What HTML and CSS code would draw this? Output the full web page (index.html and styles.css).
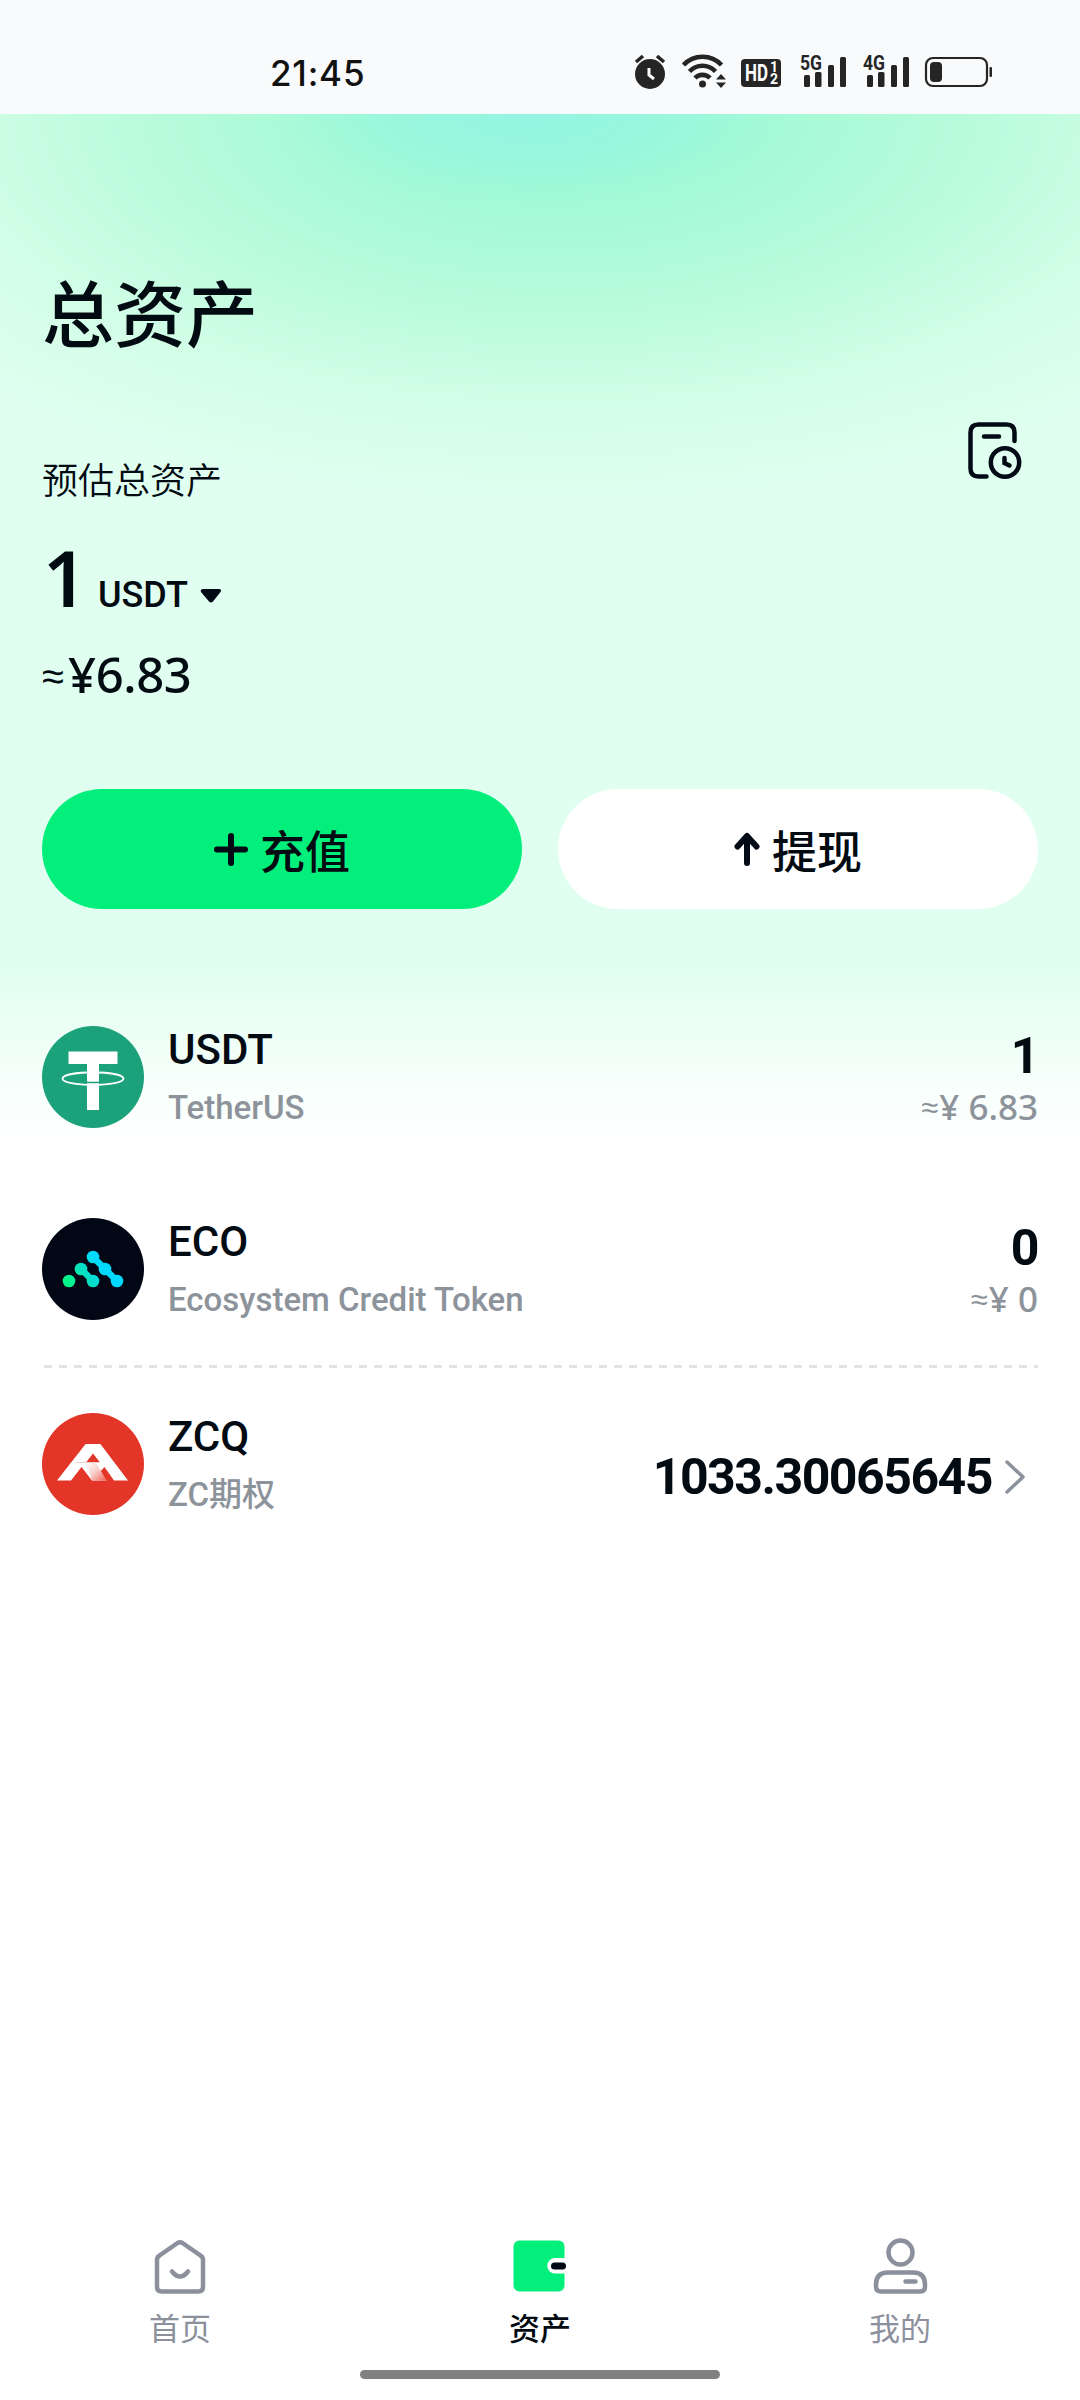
FILE: index.html
```html
<!DOCTYPE html>
<html lang="zh-CN">
<head>
<meta charset="utf-8">
<title>总资产</title>
<link rel="stylesheet" href="styles.css">
</head>
<body>
<div class="screen">
  <header class="status">
    <time class="clock">21:45</time>
    <svg class="status-icons" width="370" height="50" viewBox="630 45 370 50" fill="#252525">
      <circle cx="650" cy="74" r="15"/>
      <path d="M636 62l7-6M664 62l-7-6" stroke="#252525" stroke-width="3.6" fill="none"/>
      <path d="M649 68v7l5 4" stroke="#f9fafc" stroke-width="3" fill="none"/>
      <g fill="none" stroke="#252525" stroke-width="4.6">
        <path d="M683.500 65a26 26 0 0 1 38 0"/>
        <path d="M689.500 71.500a17.500 17.500 0 0 1 26 0"/>
        <path d="M695 78a10.500 10.500 0 0 1 15 0"/>
      </g>
      <circle cx="702.500" cy="84" r="3.500"/>
      <path d="M721 74l5 5.500h-10zM721 88l-5-5.500h10z"/>
      <rect x="741" y="59" width="40" height="28" rx="4"/>
      <text class="hd" x="745" y="81" textLength="23" lengthAdjust="spacingAndGlyphs">HD</text>
      <text class="tiny" x="770" y="72">1</text><text class="tiny" x="770" y="84">2</text>
      <text class="net" x="800" y="70" textLength="22" lengthAdjust="spacingAndGlyphs">5G</text>
      <g><rect x="804" y="75" width="6" height="12" rx="1.500"/><rect x="815" y="72" width="6.500" height="15" rx="1.500"/><rect x="828" y="65" width="6" height="22" rx="1.500"/><rect x="840" y="57" width="6" height="30" rx="1.500"/></g>
      <text class="net" x="863" y="70" textLength="22" lengthAdjust="spacingAndGlyphs">4G</text>
      <g transform="translate(63)"><rect x="804" y="75" width="6" height="12" rx="1.500"/><rect x="815" y="72" width="6.500" height="15" rx="1.500"/><rect x="828" y="65" width="6" height="22" rx="1.500"/><rect x="840" y="57" width="6" height="30" rx="1.500"/></g>
      <rect x="926" y="58" width="61" height="28" rx="7" fill="none" stroke="#252525" stroke-width="2.200"/>
      <rect x="930" y="62" width="12" height="20" rx="4"/>
      <rect x="989.500" y="67" width="2.500" height="10" rx="1"/>
    </svg>
  </header>

  <main class="page">
    <h1 class="title">总资产</h1>
    <section class="summary">
      <div class="label">预估总资产</div>
      <svg class="history" width="56" height="60" viewBox="0 0 56 60" fill="none" stroke="#020b15" stroke-width="4.500" stroke-linecap="round">
        <path d="M19.500 54.500h-8q-8 0-8-8v-36q0-8 8-8h28q8 0 8 8V19M17 14.500h15"/>
        <circle cx="38" cy="40.500" r="14.200"/>
        <path d="M37.500 36v5l5 2.500"/>
      </svg>
    </section>
    <div class="balance"><span class="amount">1</span><span class="unit">USDT</span><svg class="caret" width="22" height="16" viewBox="0 0 22 16" fill="#020b15"><path d="M2.500 1h17q2.500 1 1 3L13 13.500q-2 2-4 0L1 4Q0 2 2.500 1z"/></svg></div>
    <div class="fiat"><span class="approx">≈</span>¥6.83</div>
    <div class="actions">
      <button class="action deposit"><svg width="34" height="34" viewBox="0 0 34 34" stroke="#020b15" stroke-width="6" stroke-linecap="round"><path d="M17 4v27M3 17.500h28"/></svg>充值</button>
      <button class="action withdraw"><svg width="26" height="34" viewBox="0 0 26 34" fill="none" stroke="#020b15" stroke-width="6" stroke-linecap="round" stroke-linejoin="round"><path d="M13 5v26M3.500 14.500L13 4l9.500 10.500"/></svg>提现</button>
    </div>
    <ul class="tokens">
      <li class="token">
        <svg class="logo" viewBox="0 0 102 102"><circle cx="51" cy="51" r="51" fill="#1ba27a"/><path d="M26.500 25.500h49V38H57v46H45V38H26.500z" fill="#fff"/><path d="M45 46.500c-14 .5-24.500 3-24.500 6.300 0 3.500 13.500 6.200 30.500 6.200s30.500-2.700 30.500-6.200c0-3.300-10.500-5.800-24.500-6.300" fill="none" stroke="#fff" stroke-width="1.800"/><path d="M45 56.200q6 .5 12 0" stroke="#1ba27a" stroke-width="1.500" fill="none"/></svg>
        <div class="names"><strong>USDT</strong><span>TetherUS</span></div>
        <div class="values"><b>1</b><span><i>≈</i>¥ 6.83</span></div>
      </li>
      <li class="token">
        <svg class="logo" viewBox="0 0 102 102"><defs><linearGradient id="eco" gradientUnits="userSpaceOnUse" x1="27" y1="63" x2="57" y2="45"><stop offset="0" stop-color="#05f58a"/><stop offset=".5" stop-color="#05dfc4"/><stop offset="1" stop-color="#00d9ff"/></linearGradient></defs><circle cx="51" cy="51" r="51" fill="#020715"/><g fill="url(#eco)"><circle cx="27" cy="63" r="6.300"/><circle cx="39" cy="51" r="6.300"/><circle cx="51" cy="63" r="6.300"/><circle cx="51" cy="39" r="6.300"/><circle cx="63" cy="51" r="6.300"/><circle cx="75" cy="63" r="6.300"/></g><path d="M39 51l12 12M51 39l24 24" stroke="url(#eco)" stroke-width="6.500"/></svg>
        <div class="names"><strong>ECO</strong><span>Ecosystem Credit Token</span></div>
        <div class="values"><b>0</b><span><i>≈</i>¥ 0</span></div>
      </li>
      <li class="token linked">
        <svg class="logo" viewBox="0 0 102 102"><defs><linearGradient id="fold" x1="0" y1="0" x2="1" y2="1"><stop offset="0" stop-color="#fff"/><stop offset=".5" stop-color="#f8ccca"/><stop offset="1" stop-color="#ec6155"/></linearGradient></defs><circle cx="51" cy="51" r="51" fill="#e43529"/><path fill-rule="evenodd" d="M43.600 31H58.400L86 67.500H72L62.500 54 57.500 59.500 64.500 67.500H50L39.500 54 29 67.500H15zM51 40.500L44 49.500H58z" fill="#fff"/><path d="M44 49.500H54L64.500 67.500H50z" fill="url(#fold)"/><path d="M34 49.500H58" stroke="#f5cfcc" stroke-width="1"/></svg>
        <div class="names"><strong>ZCQ</strong><span>ZC期权</span></div>
        <div class="values"><b>1033.30065645</b><svg width="22" height="36" viewBox="0 0 22 36" fill="none" stroke="#8d939d" stroke-width="3.500" stroke-linecap="round" stroke-linejoin="round"><path d="M3 3l16 15L3 33"/></svg></div>
      </li>
    </ul>
  </main>

  <nav class="tabs">
    <a class="tab">
      <svg width="60" height="64" viewBox="0 0 60 64" fill="none" stroke="#8c909d" stroke-width="4.500" stroke-linecap="round" stroke-linejoin="round"><path d="M7 23q0-3 2.500-4.500L27.500 6q2.500-1.500 5 0l18 12.500Q53 20 53 23V50q0 4.500-4.500 4.500h-37Q7 54.500 7 50z"/><path d="M22 34.500q8 10 16 0"/></svg>
      <span>首页</span>
    </a>
    <a class="tab active">
      <svg width="60" height="64" viewBox="0 0 60 64"><rect x="3.500" y="3.500" width="51" height="51" rx="6" fill="#02ef7c"/><path d="M60 21H45a7.500 7.500 0 0 0 0 15.500h15z" fill="#fff"/><rect x="41" y="25.500" width="15" height="7" rx="3.500" fill="#020715"/></svg>
      <span>资产</span>
    </a>
    <a class="tab">
      <svg width="60" height="64" viewBox="0 0 60 64" fill="none" stroke="#8c909d" stroke-width="4.500" stroke-linecap="round"><circle cx="30.500" cy="15.500" r="12"/><path d="M18 35.500h25q12 0 12 12v2q0 5-5 5H11q-5 0-5-5v-2q0-12 12-12zM35.500 44.500h10"/></svg>
      <span>我的</span>
    </a>
  </nav>
  <div class="home-indicator"></div>
</div>
</body>
</html>
```
FILE: styles.css
```css
* { box-sizing: border-box; }
body { margin: 0; }
.screen {
  width: 1080px;
  height: 2400px;
  display: flex;
  flex-direction: column;
  overflow: hidden;
  background: #fff;
  color: #020a12;
  font-family: Roboto, "Noto Sans CJK SC", sans-serif;
}
svg { display: block; flex: none; }
.status {
  height: 114px;
  flex: none;
  display: flex;
  justify-content: space-between;
  align-items: flex-start;
  padding: 45px 80px 0 270px;
  background: #f9fafc;
}
.clock { font: 500 35px/56px Inter, sans-serif; letter-spacing: .8px; color: #111; }
.hd { font: 700 23px Roboto, sans-serif; fill: #fff; }
.tiny { font: 700 14px Roboto, sans-serif; fill: #fff; }
.net { font: 700 20px Roboto, sans-serif; }
.page {
  flex: 1;
  padding: 150px 42px 0;
  background:
    linear-gradient(to bottom, #fff0 850px, #fffc 980px, #fff 1040px),
    radial-gradient(ellipse 260px 95px at 530px 0, #93f5e2 0, #93f5e2aa 40%, #93f5e200 100%),
    radial-gradient(ellipse 820px 390px at 560px 0, #9cf9d4 0, #a5fad6 26%, #b7fbdb 49%, #d1fee6 74%, #e0fff0 100%);
}
.title { margin: 0; font-size: 72px; line-height: 106px; font-weight: 500; }
.summary { display: flex; justify-content: space-between; margin-top: 50px; height: 108px; padding-right: 15px; }
.label { padding-top: 36px; font-size: 36px; line-height: 52px; font-weight: 350; }
.history { margin-top: 2px; }
.balance { display: flex; align-items: baseline; height: 100px; }
.amount { width: 56px; padding-left: 1px; font: 600 77px/100px "Noto Sans", sans-serif; }
.unit { font-size: 36px; font-weight: 500; }
.caret { margin-left: 12px; position: relative; top: -3px; }
.fiat { font: 500 49px/66px "Noto Sans", sans-serif; height: 66px; margin-top: 13px; letter-spacing: -.4px; }
.approx { display: inline-block; width: 26px; font-size: 40px; line-height: 50px; vertical-align: 3px; }
.actions { display: grid; grid-template-columns: 1fr 1fr; gap: 36px; margin-top: 82px; }
.action {
  height: 120px;
  border: 0;
  border-radius: 60px;
  display: flex;
  align-items: center;
  justify-content: center;
  gap: 12px;
  padding: 0 7px;
  font: 500 45px "Noto Sans CJK SC", sans-serif;
  color: #020a12;
}
.deposit { background: #02ef7c; }
.withdraw { background: #fff; }
.tokens { list-style: none; margin: 86px 0 0; padding: 0; }
.token { display: flex; height: 192px; padding-top: 31px; }
.logo { width: 102px; height: 102px; }
.names { flex: 1; padding-left: 24px; }
.names strong, .names span, .values b, .values > span { display: block; }
.names strong { font-size: 42px; line-height: 48px; font-weight: 500; }
.names span { font-size: 33px; line-height: 48px; margin-top: 10px; color: #8c939b; font-weight: 500; }
.values { text-align: right; }
.values b { font-size: 50px; line-height: 61px; font-weight: 700; letter-spacing: -1.5px; }
.values > span { font: 500 35px/42px "Noto Sans", sans-serif; margin-top: -1px; color: #8c939b; }
.values i { display: inline-block; width: 18px; text-align: left; font: 500 31px/36px "Noto Sans", sans-serif; vertical-align: 2px; }
.linked {
  height: 206px;
  margin-top: -14px;
  padding-top: 48px;
  background: repeating-linear-gradient(90deg, #fff 0 2px, #e2e3e5 2px 10px, #fff 10px 15px) top / 100% 3px no-repeat;
}
.linked .values { display: flex; gap: 12px; padding: 34px 12px 0 0; }
.linked .values svg { margin-top: 12px; }
.tabs { height: 133px; flex: none; display: flex; }
.tab { flex: 1; display: flex; flex-direction: column; align-items: center; color: #8c909d; }
.tab span { font-size: 31px; line-height: 44px; font-weight: 400; margin-top: 7px; }
.tab.active { color: #020a12; }
.tab.active span { font-weight: 500; }
.home-indicator { width: 360px; height: 9px; border-radius: 5px; background: #808080; margin: 0 auto 21px; flex: none; }
```
